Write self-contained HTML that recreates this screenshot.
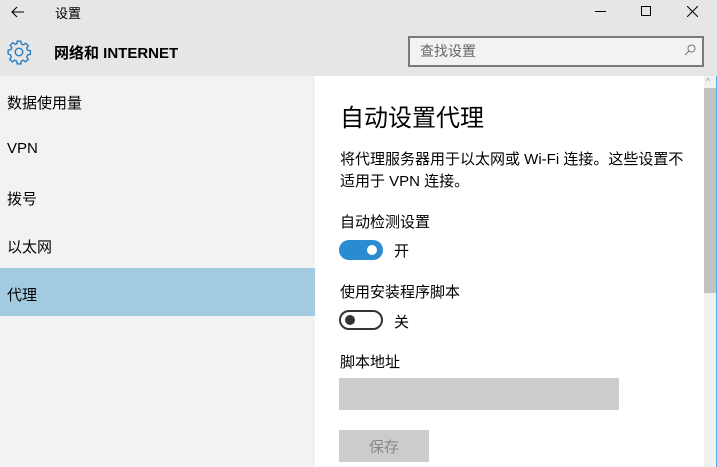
<!DOCTYPE html><html><head><meta charset="utf-8"><style>
*{margin:0;padding:0;box-sizing:border-box}
body{width:717px;height:467px;overflow:hidden;background:#e6e6e6;font-family:"Liberation Sans","Noto Sans CJK SC",sans-serif;color:#000;position:relative}
.a{position:absolute;white-space:nowrap}
</style></head><body>
<svg class="a" style="left:11px;top:6px" width="14" height="12" viewBox="0 0 14 12" fill="none" stroke="#000" stroke-width="1.1"><path d="M13 6H1M6 1L1 6l5 5"/></svg>
<div class="a" style="left:55px;top:3px;font-size:13px">设置</div>
<div class="a" style="left:595px;top:11px;width:11px;height:1px;background:#000"></div>
<div class="a" style="left:641px;top:6px;width:10px;height:10px;border:1px solid #000"></div>
<svg class="a" style="left:687px;top:6px" width="11" height="11" viewBox="0 0 11 11" stroke="#000" stroke-width="1"><path d="M0 0L11 11M11 0L0 11"/></svg>
<svg class="a" style="left:6px;top:39px" width="26" height="26" viewBox="0 0 24 24" fill="none" stroke="#2a7fc7" stroke-width="1.3"><path d="M10.3 2h3.4l.5 2.6 1.8.8 2.2-1.5 2.4 2.4-1.5 2.2.8 1.8 2.6.5v3.4l-2.6.5-.8 1.8 1.5 2.2-2.4 2.4-2.2-1.5-1.8.8-.5 2.6h-3.4l-.5-2.6-1.8-.8-2.2 1.5-2.4-2.4 1.5-2.2-.8-1.8L2 13.7v-3.4l2.6-.5.8-1.8-1.5-2.2 2.4-2.4 2.2 1.5 1.8-.8z"/><circle cx="12" cy="12" r="3.5"/></svg>
<div class="a" style="left:54px;top:42px;font-size:15px;font-weight:bold">网络和 INTERNET</div>
<div class="a" style="left:408px;top:36px;width:296px;height:31px;border:2px solid #7a7a7a;background:#f2f2f2"></div>
<div class="a" style="left:420px;top:41px;font-size:14px;color:#666">查找设置</div>
<svg class="a" style="left:684px;top:44px" width="12" height="12" viewBox="0 0 12 12" fill="none" stroke="#777" stroke-width="1"><circle cx="7.5" cy="4.5" r="3.5"/><path d="M5 7L1 11"/></svg>
<div class="a" style="left:0;top:76px;width:315px;height:391px;background:#f2f2f2"></div>
<div class="a" style="left:0;top:268px;width:315px;height:48px;background:#a2cbe2"></div>
<div class="a" style="left:7px;top:92px;font-size:15px">数据使用量</div>
<div class="a" style="left:7px;top:140px;font-size:15px">VPN</div>
<div class="a" style="left:7px;top:188px;font-size:15px">拨号</div>
<div class="a" style="left:7px;top:236px;font-size:15px">以太网</div>
<div class="a" style="left:7px;top:284px;font-size:15px">代理</div>
<div class="a" style="left:315px;top:76px;width:389px;height:391px;background:#fff"></div>
<div class="a" style="left:704px;top:76px;width:12px;height:391px;background:#f0f0f0"></div>
<div class="a" style="left:704px;top:88px;width:12px;height:205px;background:#c2c2c2"></div>
<div class="a" style="left:706px;top:76px;font-size:9px;color:#999">^</div>
<div class="a" style="left:716px;top:76px;width:1px;height:391px;background:#5aaef0"></div>
<div class="a" style="left:340px;top:98px;font-size:24px">自动设置代理</div>
<div class="a" style="left:340px;top:149px;font-size:15px;line-height:22px">将代理服务器用于以太网或 Wi-Fi 连接。这些设置不<br>适用于 VPN 连接。</div>
<div class="a" style="left:340px;top:211px;font-size:15px">自动检测设置</div>
<div class="a" style="left:339px;top:240px;width:44px;height:20px;border-radius:10px;background:#2b8bd0"></div>
<div class="a" style="left:367px;top:245px;width:10px;height:10px;border-radius:50%;background:#fff"></div>
<div class="a" style="left:394px;top:240px;font-size:15px">开</div>
<div class="a" style="left:340px;top:281px;font-size:15px">使用安装程序脚本</div>
<div class="a" style="left:339px;top:310px;width:44px;height:20px;border-radius:10px;border:2px solid #333;background:#fff"></div>
<div class="a" style="left:345px;top:315px;width:10px;height:10px;border-radius:50%;background:#333"></div>
<div class="a" style="left:394px;top:311px;font-size:15px">关</div>
<div class="a" style="left:340px;top:351px;font-size:15px">脚本地址</div>
<div class="a" style="left:339px;top:378px;width:280px;height:32px;background:#cccccc"></div>
<div class="a" style="left:339px;top:430px;width:90px;height:32px;background:#cccccc"></div>
<div class="a" style="left:369px;top:436px;font-size:15px;color:#888">保存</div>
</body></html>
